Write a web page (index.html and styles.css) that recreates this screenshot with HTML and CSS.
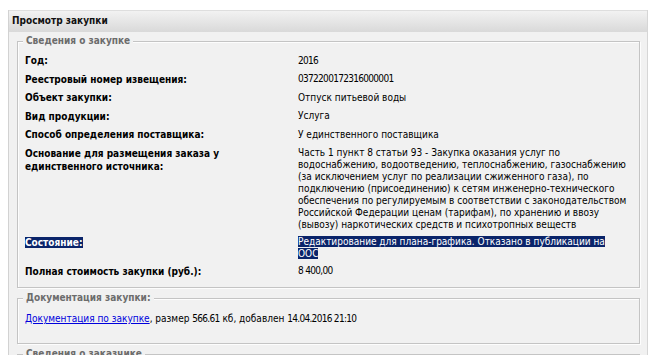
FILE: index.html
```html
<!DOCTYPE html>
<html lang="ru">
<head>
<meta charset="utf-8">
<title>Просмотр закупки</title>
<link rel="stylesheet" href="styles.css">
</head>
<body>
<div class="panel">
  <div class="panel-head">Просмотр закупки</div>
  <div class="panel-body">
    <fieldset class="box box-main">
      <legend>Сведения о закупке</legend>
      <div class="grid">
        <div class="lbl">Год:</div>
        <div class="val"><span class="num">2016</span></div>
        <div class="lbl">Реестровый номер извещения:</div>
        <div class="val"><span class="num">0372200172316000001</span></div>
        <div class="lbl">Объект закупки:</div>
        <div class="val">Отпуск питьевой воды</div>
        <div class="lbl">Вид продукции:</div>
        <div class="val">Услуга</div>
        <div class="lbl">Способ определения поставщика:</div>
        <div class="val">У единственного поставщика</div>
        <div class="lbl">Основание для размещения заказа у<br>единственного источника:</div>
        <div class="val">Часть 1 пункт 8 статьи 93 - Закупка оказания услуг по<br>водоснабжению, водоотведению, теплоснабжению, газоснабжению<br>(за исключением услуг по реализации сжиженного газа), по<br>подключению (присоединению) к сетям инженерно-технического<br>обеспечения по регулируемым в соответствии с законодательством<br>Российской Федерации ценам (тарифам), по хранению и ввозу<br>(вывозу) наркотических средств и психотропных веществ</div>
        <div class="lbl"><span class="sel">Состояние:</span></div>
        <div class="val"><span class="sel">Редактирование для плана-графика. Отказано в публикации на<br>ООС</span></div>
        <div class="lbl">Полная стоимость закупки (руб.):</div>
        <div class="val"><span class="num">8 400,00</span></div>
      </div>
    </fieldset>
    <fieldset class="box box-doc">
      <legend>Документация закупки:</legend>
      <div class="doc"><a href="#" class="link">Документация по закупке</a>, размер <span class="num">566.61</span> кб, добавлен <span class="num">14.04.2016 21:10</span></div>
    </fieldset>
    <fieldset class="box box-cust">
      <legend>Сведения о заказчике</legend>
      <div class="doc">&nbsp;</div>
    </fieldset>
  </div>
</div>
</body>
</html>
```

FILE: styles.css
```css
html, body {
  margin: 0;
  padding: 0;
  background: #ffffff;
  overflow: hidden;
}
body {
  font-family: "DejaVu Sans Condensed", "DejaVu Sans", sans-serif;
  font-size: 10px;
  color: #000;
}
.panel {
  margin: 10px 0 0 8px;
  width: 638px;
  border-left: 1px solid #d2d2d2;
  border-right: 1px solid #d6d6d6;
  background: #f1f1f1;
  height: 400px;
}
.panel-head {
  height: 21px;
  line-height: 19px;
  padding-left: 3px;
  font-weight: bold;
  color: #111;
  border-top: 1px solid #dedede;
  background: linear-gradient(#f2f2f2, #d9d9d9);
}
.panel-body {
  padding: 2px 7px 0 8px;
  display: flex;
  flex-direction: column;
  gap: 3px;
}
.box {
  margin: 0;
  min-width: 0;
  padding: 3px 0 7px 7px;
  border: 1px solid #c4c4c4;
  box-shadow: inset 1px 1px 0 #fdfdfd, 1px 1px 0 #fdfdfd;
}
.box legend {
  margin-left: -2px;
  padding: 0 3px;
  line-height: 14px;
  font-weight: bold;
  color: #6c6c6c;
  background: #f1f1f1;
}
.box-doc {
  padding-top: 0;
  padding-bottom: 17px;
}
.box-cust {
  padding-top: 0;
}
.grid {
  display: grid;
  grid-template-columns: 273px 1fr;
}
.lbl {
  font-weight: bold;
  line-height: 13px;
  padding: 3px 0 2.5px 0;
}
.val {
  line-height: 12px;
  padding: 3.5px 0 1.5px 0;
  white-space: nowrap;
}
.num {
  letter-spacing: -0.7px;
}
.sel {
  background: #0a246a;
  color: #fff;
}
.doc {
  padding-top: 7px;
  line-height: 14px;
}
.link {
  color: #0000dd;
  text-decoration: underline;
}
```
